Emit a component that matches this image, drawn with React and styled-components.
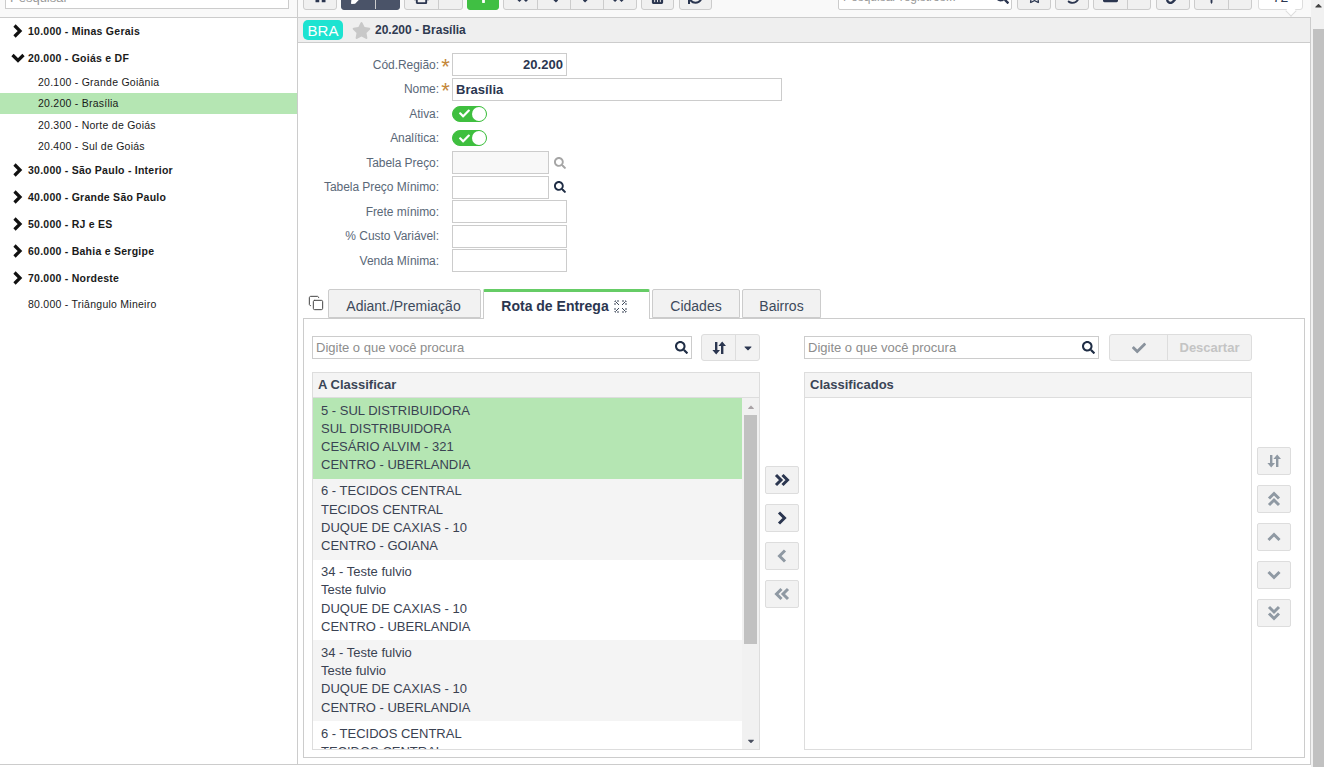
import React from "react";
import styled, { createGlobalStyle } from "styled-components";
import { FaHome, FaPen, FaPrint, FaPlus, FaTrashAlt, FaSync, FaSearch, FaStar, FaRegStar, FaHistory, FaLink, FaThumbtack, FaCheck, FaCaretDown, FaFolder, FaCaretUp } from "react-icons/fa";
import { Copy } from "lucide-react";

const Global = createGlobalStyle`
  html, body { margin: 0; padding: 0; height: 100%; overflow: hidden; background: #fff; }
  body { font-family: "Liberation Sans", Arial, sans-serif; color: #2b3650; }
  * { box-sizing: border-box; }
`;

const Page = styled.div`display: flex; height: 767px; width: 1324px; overflow: hidden;`;
const Content = styled.div`display: flex; flex: 1; height: 765px; border-bottom: 1px solid #ccc;`;
const PageScroll = styled.div`width: 13px; display: flex; flex-direction: column; background: #f1f1f1; padding-left: 2px;`;
const ScrollArrowCell = styled.div`height: 29px; display: flex; justify-content: center; color: #444; font-size: 11px; align-items: flex-start;`;
const PageThumb = styled.div`flex: 1; background: #c1c1c1;`;

const Sidebar = styled.aside`width: 298px; border-right: 1px solid #ccc; display: flex; flex-direction: column; flex: none;`;
const SideTop = styled.div`height: 18px; background: #f9f9f9; border-bottom: 1px solid #ccc; padding: 0 8px 8px 5px; display: flex; align-items: flex-end; overflow: hidden; flex: none;`;
const SideSearch = styled.div`width: 284px; height: 24px; flex: none; background: #fff; border: 1px solid #ccc; font-size: 13px; color: #999; padding: 0 4px; display: flex; align-items: center;`;
const Tree = styled.div`display: flex; flex-direction: column; margin-top: -0.6px;`;
const TreeRow = styled.div`
  display: flex; align-items: center; flex: none;
  height: ${p => (p.$child ? "21.3px" : p.$h || "27px")};
  padding-left: ${p => (p.$child ? "38px" : "28px")};
  background: ${p => (p.$active ? "#b5e6b3" : "transparent")};
  font-size: 10.5px; letter-spacing: .25px; color: #1a1a1a;
  font-weight: ${p => (p.$bold ? 700 : 400)};
  position: relative;
`;
const TreeCaret = styled.svg`position: absolute; left: ${p => (p.$down ? "11px" : "12px")}; top: 50%; transform: translateY(-50%);`;

const Main = styled.main`flex: 1; display: flex; flex-direction: column; min-width: 0;`;
const Toolbar = styled.div`height: 18px; flex: none; display: flex; align-items: flex-end; padding: 0 8px 7px 5px; border-bottom: 1px solid #ccc; background: #f9f9f9; overflow: hidden; position: relative;`;
const ToolSpacer = styled.div`flex: 1;`;
const ToolGroup = styled.div`
  display: flex; height: 28px; flex: none; margin-right: ${p => p.$mr ?? 4}px;
  border: 1px solid ${p => (p.$dark ? "#4a5368" : p.$green ? "#40bf43" : "#ccc")}; border-radius: 3px;
  background: ${p => (p.$dark ? "#4a5368" : p.$green ? "#40bf43" : "#f0f0f0")};
  color: ${p => (p.$dark || p.$green ? "#fff" : "#2b3650")}; overflow: hidden;
`;
const ToolCell = styled.div`
  width: ${p => p.$w || 33}px; display: flex; align-items: center; justify-content: center; font-size: 15px;
  & + & { border-left: 1px solid ${p => (p.$dark ? "#667085" : "#ccc")}; }
`;
const ToolSearch = styled.div`
  width: 174px; height: 28px; flex: none; background: #fff; border: 1px solid #ccc; border-radius: 2px; margin-right: 5px;
  display: flex; align-items: center; justify-content: space-between; padding: 2px 2px 0 4px; font-size: 12px; color: #999;
  svg { color: #2b3650; font-size: 14px; }
`;
const Counter = styled.div`
  width: 45px; height: 28px; flex: none; margin-left: 6px; background: #fff; border: 1px solid #ddd; border-radius: 3px;
  display: flex; align-items: center; justify-content: center; font-size: 14px; padding-top: 1px; color: #2b3650;
`;
const CounterTip = styled.div`
  position: absolute; left: 989px; top: 7px; width: 8px; height: 8px; background: #fff; border-right: 1px solid #ddd; border-bottom: 1px solid #ddd; transform: rotate(45deg);
`;

const Panel = styled.div`flex: 1; border-right: 1px solid #ccc; display: flex; flex-direction: column; min-height: 0;`;
const PanelHead = styled.div`height: 25px; flex: none; background: #efefef; border-bottom: 1px solid #ccc; display: flex; align-items: center; padding-left: 5px;`;
const Badge = styled.div`width: 40px; height: 20px; border-radius: 5px; background: #1de3d1; color: #fff; font-size: 15px; display: flex; align-items: center; justify-content: center; margin-right: 9px;`;
const StarWrap = styled.div`color: #c8c8c8; font-size: 19px; display: flex; margin-right: 4px;`;
const PanelTitle = styled.div`font-size: 12px; font-weight: 700; color: #2f3a50;`;

const Form = styled.div`padding: 9.25px 0 0 5px; flex: none;`;
const Row = styled.div`display: flex; align-items: center; height: 24.5px;`;
const Label = styled.div`width: 136px; flex: none; text-align: right; font-size: 12px; letter-spacing: -0.05px; color: #5a6878;`;
const Req = styled.div`width: 13px; flex: none; color: #c4873a; font-size: 22px; line-height: 1; text-align: center; height: 13px; margin-top: -5px;`;
const Input = styled.div`
  width: ${p => p.$w}px; height: 23px; flex: none; border: 1px solid #ccc; background: ${p => (p.$off ? "#f8f8f8" : "#fff")};
  font-size: 13px; font-weight: 700; letter-spacing: .05px; color: #2b3650; padding: 0 3px; display: flex; align-items: center;
  justify-content: ${p => (p.$right ? "flex-end" : "flex-start")};
`;
const Lookup = styled.div`margin-left: 5px; font-size: 12px; display: flex; color: ${p => (p.$off ? "#a5a5a5" : "#1f2d45")};`;
const Toggle = styled.div`
  width: 35px; height: 16px; border-radius: 8px; background: #3fbf3f; border: 1px solid #3fbf3f; display: flex; align-items: center; padding-left: 6px; position: relative; color: #fff; font-size: 11px;
`;
const Knob = styled.div`position: absolute; right: 0; top: 0; width: 14px; height: 14px; border-radius: 50%; background: #fff;`;

const TabRow = styled.div`display: flex; align-items: flex-end; height: 29px; margin-top: 16.25px; padding-left: 5px; flex: none; position: relative; z-index: 1;`;
const CopyCell = styled.div`width: 25px; align-self: flex-start; padding: 6px 0 0 5px; color: #444; display: flex; svg { width: 16px; height: 16px; }`;
const Tab = styled.div`
  width: ${p => p.$w}px; flex: none; margin-right: 2px; font-size: 14px; display: flex; align-items: center; justify-content: center; gap: 5px;
  height: ${p => (p.$active ? "30px" : "29px")};
  padding: ${p => (p.$active ? "1px 5px 0 0" : `4px ${p.$pr ?? 0}px 0 0`)};
  background: ${p => (p.$active ? "#fff" : "#f2f2f2")};
  border: 1px solid #ccc; border-bottom: ${p => (p.$active ? "none" : "1px solid #ccc")};
  border-top: ${p => (p.$active ? "3px solid #66cc66" : "1px solid #ccc")};
  border-radius: 2px 2px 0 0;
  font-weight: ${p => (p.$active ? 700 : 400)};
  color: ${p => (p.$active ? "#2b3650" : "#3d4a5c")};
  margin-bottom: ${p => (p.$active ? "-1px" : "0")};
`;
const TabBody = styled.div`
  margin: 0 5px 0 5px; height: 440px; border: 1px solid #ccc; padding: 15px 0 0 8px; flex: none;
  display: grid; grid-template-columns: 448px 44px 448px 44px; grid-template-rows: 27px 389px; row-gap: 11px;
`;
const ListBar = styled.div`display: flex; align-items: center;`;
const SearchBox = styled.div`
  width: ${p => p.$w}px; height: 23px; flex: none; border: 1px solid #ccc; background: #fff; color: #8d8d8d; font-size: 13px;
  display: flex; align-items: center; justify-content: space-between; padding: 0 3px; margin-right: ${p => p.$mr}px;
  svg { color: #1f2d45; font-size: 13px; }
`;
const BtnGroup = styled.div`display: flex; height: 27px; border: 1px solid #ddd; border-radius: 3px; background: #f2f2f2; flex: none; overflow: hidden;`;
const BtnCell = styled.div`
  width: ${p => p.$w}px; display: flex; align-items: center; justify-content: center;
  color: ${p => (p.$off ? "#8a939d" : "#2b3650")}; font-size: ${p => p.$fs || 13}px;
  & + & { border-left: 1px solid #ddd; }
`;
const DiscardText = styled.span`font-size: 13px; font-weight: 700; color: #c4c4c4;`;

const ListBox = styled.div`height: 378px; border: 1px solid #ddd; display: flex; flex-direction: column; overflow: hidden;`;
const ListHead = styled.div`height: 25px; flex: none; background: #f4f4f4; border-bottom: 1px solid #ddd; font-size: 13px; font-weight: 700; color: #3a4556; padding: 0 0 2px 5px; display: flex; align-items: center;`;
const ListBody = styled.div`flex: 1; display: flex; min-height: 0;`;
const Items = styled.div`flex: 1; overflow: hidden;`;
const Item = styled.div`
  height: 80.8px; padding: 3.7px 0 0 8px; font-size: 13px; line-height: 18.15px; color: #3a4252; white-space: nowrap;
  background: ${p => (p.$sel ? "#b5e6b3" : p.$alt ? "#f4f4f4" : "#fff")};
`;
const ItemsScroll = styled.div`width: 17px; flex: none; background: #f1f1f1; display: flex; flex-direction: column; align-items: center;`;
const ScrollCap = styled.div`height: ${p => p.$h}px; flex: none; display: flex; align-items: center; justify-content: center; color: ${p => p.$c}; font-size: 10px; width: 100%;`;
const ItemsThumb = styled.div`height: 229px; width: 13px; flex: none; background: #c1c1c1;`;
const ScrollFill = styled.div`flex: 1;`;

const Col = styled.div`display: flex; flex-direction: column; align-items: center; gap: 10px; padding-top: ${p => p.$top}px;`;
const MoveBtn = styled.div`
  width: 34px; height: 28px; flex: none; border: 1px solid #ddd; border-radius: 2px; background: #f2f2f2;
  display: flex; align-items: center; justify-content: center; color: ${p => (p.$off ? "#8f99a3" : "#2b3650")};
`;

const Chev = ({ dir = "right", double, size = 16 }) => {
  const rot = { right: 0, down: 90, left: 180, up: 270 }[dir];
  return (
    <svg width={size} height={size} viewBox="0 0 16 16" fill="none" stroke="currentColor" strokeWidth="3" style={{ transform: `rotate(${rot}deg)` }}>
      {double ? (
        <>
          <path d="M2 3l5 5-5 5" />
          <path d="M8.5 3l5 5-5 5" />
        </>
      ) : (
        <path d="M5 2.5l5.5 5.5L5 13.5" />
      )}
    </svg>
  );
};

const SortIcon = ({ size = 14 }) => (
  <svg width={size} height={size} viewBox="0 0 14 14" fill="currentColor">
    <path d="M3 1h2.4v8H8L4.2 13.5.4 9H3z" />
    <path d="M9 13h2.4V5H14L10.2.5 6.4 5H9z" />
  </svg>
);

const ExpandIcon = () => (
  <svg width="13" height="13" viewBox="0 0 13 13" fill="none" stroke="#3a4556" strokeWidth="1">
    <path d="M1 5V1h4M8 1h4v4M12 8v4H8M5 12H1V8" strokeDasharray="2 1" />
    <path d="M2 2l3 3M11 2L8 5M11 11L8 8M2 11l3-3" />
  </svg>
);

const TreeChevron = ({ down }) =>
  down ? (
    <TreeCaret $down width="14" height="10" viewBox="0 0 14 10" fill="none" stroke="#111" strokeWidth="3.2">
      <path d="M1.5 2l5.5 5.5L12.5 2" />
    </TreeCaret>
  ) : (
    <TreeCaret width="11" height="14" viewBox="0 0 11 14" fill="none" stroke="#111" strokeWidth="3.2">
      <path d="M2.5 1.5L8 7l-5.5 5.5" />
    </TreeCaret>
  );

const customers = [
  { id: 1, lines: ["5 - SUL DISTRIBUIDORA", "SUL DISTRIBUIDORA", "CESÁRIO ALVIM - 321", "CENTRO - UBERLANDIA"], sel: true },
  { id: 2, lines: ["6 - TECIDOS CENTRAL", "TECIDOS CENTRAL", "DUQUE DE CAXIAS - 10", "CENTRO - GOIANA"], alt: true },
  { id: 3, lines: ["34 - Teste fulvio", "Teste fulvio", "DUQUE DE CAXIAS - 10", "CENTRO - UBERLANDIA"] },
  { id: 4, lines: ["34 - Teste fulvio", "Teste fulvio", "DUQUE DE CAXIAS - 10", "CENTRO - UBERLANDIA"], alt: true },
  { id: 5, lines: ["6 - TECIDOS CENTRAL", "TECIDOS CENTRAL", "DUQUE DE CAXIAS - 10", "CENTRO - GOIANA"] },
];

export default function App() {
  return (
    <Page>
      <Global />
      <Content>
        <Sidebar>
          <SideTop><SideSearch>Pesquisar</SideSearch></SideTop>
          <Tree>
            <TreeRow $bold><TreeChevron />10.000 - Minas Gerais</TreeRow>
            <TreeRow $bold><TreeChevron down />20.000 - Goiás e DF</TreeRow>
            <TreeRow $child>20.100 - Grande Goiânia</TreeRow>
            <TreeRow $child $active>20.200 - Brasília</TreeRow>
            <TreeRow $child>20.300 - Norte de Goiás</TreeRow>
            <TreeRow $child>20.400 - Sul de Goiás</TreeRow>
            <TreeRow $bold><TreeChevron />30.000 - São Paulo - Interior</TreeRow>
            <TreeRow $bold><TreeChevron />40.000 - Grande São Paulo</TreeRow>
            <TreeRow $bold><TreeChevron />50.000 - RJ e ES</TreeRow>
            <TreeRow $bold><TreeChevron />60.000 - Bahia e Sergipe</TreeRow>
            <TreeRow $bold><TreeChevron />70.000 - Nordeste</TreeRow>
            <TreeRow $h="24px">80.000 - Triângulo Mineiro</TreeRow>
          </Tree>
        </Sidebar>
        <Main>
          <Toolbar>
            <ToolGroup><ToolCell $w={32}><FaHome /></ToolCell></ToolGroup>
            <ToolGroup $dark><ToolCell $w={33}><FaPen /></ToolCell><ToolCell $dark $w={24} /></ToolGroup>
            <ToolGroup><ToolCell $w={33}><FaPrint /></ToolCell><ToolCell $w={24} /></ToolGroup>
            <ToolGroup $green><ToolCell $w={30}><FaPlus /></ToolCell></ToolGroup>
            <ToolGroup>
              <ToolCell><Chev dir="left" double /></ToolCell>
              <ToolCell><Chev dir="left" /></ToolCell>
              <ToolCell><Chev /></ToolCell>
              <ToolCell><Chev double /></ToolCell>
            </ToolGroup>
            <ToolGroup $mr={5}><ToolCell $w={31}><FaTrashAlt /></ToolCell></ToolGroup>
            <ToolGroup $mr={0}><ToolCell $w={31}><FaSync /></ToolCell></ToolGroup>
            <ToolSpacer />
            <ToolSearch>Pesquisar registros...<FaSearch /></ToolSearch>
            <ToolGroup><ToolCell $w={32}><FaRegStar /></ToolCell></ToolGroup>
            <ToolGroup><ToolCell $w={32}><FaHistory /></ToolCell></ToolGroup>
            <ToolGroup $mr={5}><ToolCell $w={33}><FaFolder /></ToolCell><ToolCell $w={23} /></ToolGroup>
            <ToolGroup><ToolCell $w={32}><FaLink /></ToolCell></ToolGroup>
            <ToolGroup $mr={0}><ToolCell $w={33}><FaThumbtack /></ToolCell><ToolCell $w={23} /></ToolGroup>
            <Counter>72</Counter>
            <CounterTip />
          </Toolbar>
          <Panel>
            <PanelHead>
              <Badge>BRA</Badge>
              <StarWrap><FaStar /></StarWrap>
              <PanelTitle>20.200 - Brasília</PanelTitle>
            </PanelHead>
            <Form>
              <Row><Label>Cód.Região:</Label><Req>*</Req><Input $w={115} $right>20.200</Input></Row>
              <Row><Label>Nome:</Label><Req>*</Req><Input $w={330}>Brasília</Input></Row>
              <Row><Label>Ativa:</Label><Req /><Toggle><FaCheck /><Knob /></Toggle></Row>
              <Row><Label>Analítica:</Label><Req /><Toggle><FaCheck /><Knob /></Toggle></Row>
              <Row><Label>Tabela Preço:</Label><Req /><Input $w={97} $off /><Lookup $off><FaSearch /></Lookup></Row>
              <Row><Label>Tabela Preço Mínimo:</Label><Req /><Input $w={97} /><Lookup><FaSearch /></Lookup></Row>
              <Row><Label>Frete mínimo:</Label><Req /><Input $w={115} /></Row>
              <Row><Label>% Custo Variável:</Label><Req /><Input $w={115} /></Row>
              <Row><Label>Venda Mínima:</Label><Req /><Input $w={115} /></Row>
            </Form>
            <TabRow>
              <CopyCell><Copy strokeWidth={1.5} /></CopyCell>
              <Tab $w={153} $pr={2}>Adiant./Premiação</Tab>
              <Tab $w={167} $active>Rota de Entrega <ExpandIcon /></Tab>
              <Tab $w={88}>Cidades</Tab>
              <Tab $w={79}>Bairros</Tab>
            </TabRow>
            <TabBody>
              <ListBar>
                <SearchBox $w={380} $mr={9}>Digite o que você procura<FaSearch /></SearchBox>
                <BtnGroup>
                  <BtnCell $w={33} $fs={14}><SortIcon /></BtnCell>
                  <BtnCell $w={24} $fs={12}><FaCaretDown /></BtnCell>
                </BtnGroup>
              </ListBar>
              <div />
              <ListBar>
                <SearchBox $w={295} $mr={10}>Digite o que você procura<FaSearch /></SearchBox>
                <BtnGroup>
                  <BtnCell $w={57} $off $fs={14}><FaCheck /></BtnCell>
                  <BtnCell $w={84}><DiscardText>Descartar</DiscardText></BtnCell>
                </BtnGroup>
              </ListBar>
              <div />
              <ListBox>
                <ListHead>A Classificar</ListHead>
                <ListBody>
                  <Items>
                    {customers.map(c => (
                      <Item key={c.id} $sel={c.sel} $alt={c.alt}>
                        {c.lines.map((l, i) => <div key={i}>{l}</div>)}
                      </Item>
                    ))}
                  </Items>
                  <ItemsScroll>
                    <ScrollCap $h={17} $c="#a9a3a6"><FaCaretUp /></ScrollCap>
                    <ItemsThumb />
                    <ScrollFill />
                    <ScrollCap $h={17} $c="#4a5060"><FaCaretDown /></ScrollCap>
                  </ItemsScroll>
                </ListBody>
              </ListBox>
              <Col $top={94}>
                <MoveBtn><Chev double /></MoveBtn>
                <MoveBtn><Chev /></MoveBtn>
                <MoveBtn $off><Chev dir="left" /></MoveBtn>
                <MoveBtn $off><Chev dir="left" double /></MoveBtn>
              </Col>
              <ListBox>
                <ListHead>Classificados</ListHead>
                <ListBody />
              </ListBox>
              <Col $top={75}>
                <MoveBtn $off><SortIcon /></MoveBtn>
                <MoveBtn $off><Chev dir="up" double /></MoveBtn>
                <MoveBtn $off><Chev dir="up" /></MoveBtn>
                <MoveBtn $off><Chev dir="down" /></MoveBtn>
                <MoveBtn $off><Chev dir="down" double /></MoveBtn>
              </Col>
            </TabBody>
          </Panel>
        </Main>
      </Content>
      <PageScroll>
        <ScrollArrowCell><FaCaretUp /></ScrollArrowCell>
        <PageThumb />
      </PageScroll>
    </Page>
  );
}
